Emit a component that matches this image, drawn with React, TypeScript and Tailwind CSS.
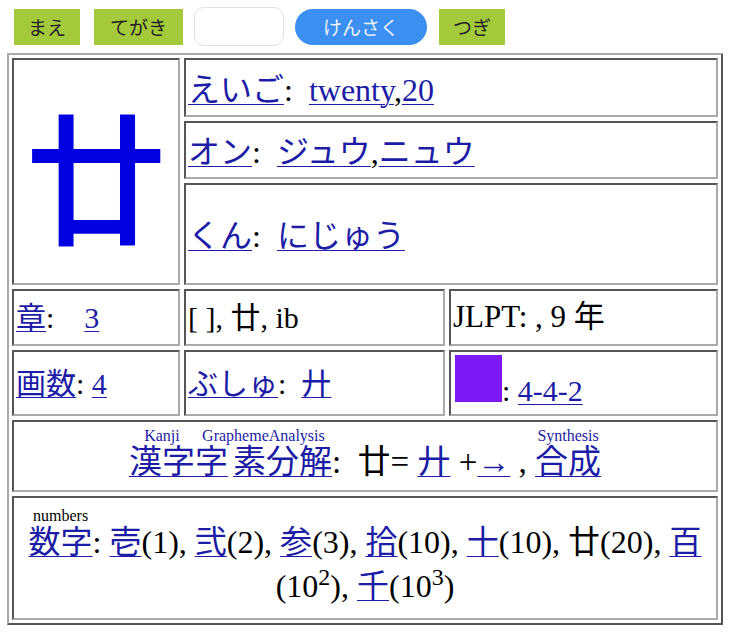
const serif = "font-['Liberation_Serif','Noto_Sans_CJK_JP',serif]";
const cell =
  'border-2 border-t-[#555] border-l-[#555] border-b-[#aaa] border-r-[#aaa] bg-white flex items-center px-[2px]';
const link = 'text-[#1c1ca6] underline decoration-1 underline-offset-[3px]';

function Btn({ label, className }: { label: string; className: string }) {
  return (
    <button className={`h-[36px] text-[19px] leading-none ${className}`}>{label}</button>
  );
}

export default function App() {
  return (
    <div className={`w-[734px] h-[635px] bg-white overflow-hidden ${serif}`}>
      {/* toolbar */}
      <div className="flex items-center pt-[7px] pl-[14px] font-['Noto_Sans_CJK_JP',sans-serif]">
        <Btn label="まえ" className="px-[14px] bg-[#a4c93b] text-[#222]" />
        <Btn label="てがき" className="ml-[14px] px-[16px] bg-[#a4c93b] text-[#222]" />
        <input className="ml-[11px] w-[90px] h-[39px] rounded-[10px] border border-[#e2e2e2] outline-none" />
        <Btn
          label="けんさく"
          className="ml-[11px] w-[132px] rounded-full bg-[#3a8ff0] text-white/90"
        />
        <Btn label="つぎ" className="ml-[12px] px-[14px] bg-[#a4c93b] text-[#222]" />
      </div>

      {/* kanji table */}
      <div className="ml-[7px] mt-[7px] w-[716px] border-2 border-t-[#aaa] border-l-[#aaa] border-b-[#555] border-r-[#555] p-[3px]">
        <div className="grid grid-cols-[168px_261px_269px] grid-rows-[59px_58px_102px_57px_66px_72px_124px] gap-[4px] text-black">
          <div className={`${cell} row-span-3 justify-center`}>
            <span className="text-[142px] leading-none text-[#0000e0] font-['Noto_Sans_CJK_JP',serif] font-medium">廿</span>
          </div>
          <div className={`${cell} col-span-2 text-[32px]`}>
            <span className="pt-[4px]">
              <a className={link}>えいご</a>:&nbsp; <a className={link}>twenty</a>,<a className={link}>20</a>
            </span>
          </div>
          <div className={`${cell} col-span-2 text-[32px]`}>
            <span className="pt-[4px]">
              <a className={link}>オン</a>:&nbsp; <a className={link}>ジュウ</a>,<a className={link}>ニュウ</a>
            </span>
          </div>
          <div className={`${cell} col-span-2 text-[32px]`}>
            <span className="pt-[4px]">
              <a className={link}>くん</a>:&nbsp; <a className={link}>にじゅう</a>
            </span>
          </div>

          <div className={`${cell} text-[30px]`}>
            <span>
              <a className={link}>章</a>:&nbsp;&nbsp;&nbsp; <a className={link}>3</a>
            </span>
          </div>
          <div className={`${cell} text-[30px]`}>
            <span>[ ], 廿, ib</span>
          </div>
          <div className={`${cell} text-[31px]`}>
            <span>JLPT: , 9 年</span>
          </div>

          <div className={`${cell} text-[30px]`}>
            <span>
              <a className={link}>画数</a>: <a className={link}>4</a>
            </span>
          </div>
          <div className={`${cell} text-[30px]`}>
            <span>
              <a className={link}>ぶしゅ</a>:&nbsp; <a className={link}>廾</a>
            </span>
          </div>
          <div className={`${cell} text-[30px] items-end pb-[6px] pl-[4px]`}>
            <span className="w-[47px] h-[47px] bg-[#7b18f4] mb-[6px]" />
            <span className="leading-none pb-[2px]">
              : <a className={link}>4-4-2</a>
            </span>
          </div>

          <div className={`${cell} col-span-3 justify-center text-[33px]`}>
            <span className="leading-tight pt-[2px]">
              <a className={link}>
                <ruby>
                  漢字<rt className="text-[16px]">Kanji</rt>
                </ruby>
                <ruby>
                  字<span className="ml-[5px]">素分解</span>
                  <rt className="text-[16px]">GraphemeAnalysis</rt>
                </ruby>
              </a>
              :&nbsp; 廿= <a className={link}>廾</a> +<a className={link}>→</a> ,&nbsp;
              <a className={link}>
                <ruby>
                  合成<rt className="text-[16px]">Synthesis</rt>
                </ruby>
              </a>
            </span>
          </div>

          <div className={`${cell} col-span-3 justify-center text-center text-[32px] px-[12px]`}>
            <p className="leading-[1.35]">
              <ruby>
                <a className={link}>数字</a>
                <rt className="text-[16px] text-black">numbers</rt>
              </ruby>
              : <a className={link}>壱</a>(1), <a className={link}>弐</a>(2), <a className={link}>参</a>(3),{' '}
              <a className={link}>拾</a>(10), <a className={link}>十</a>(10), 廿(20), <a className={link}>百</a>
              (10<sup>2</sup>), <a className={link}>千</a>(10<sup>3</sup>)
            </p>
          </div>
        </div>
      </div>
    </div>
  );
}
